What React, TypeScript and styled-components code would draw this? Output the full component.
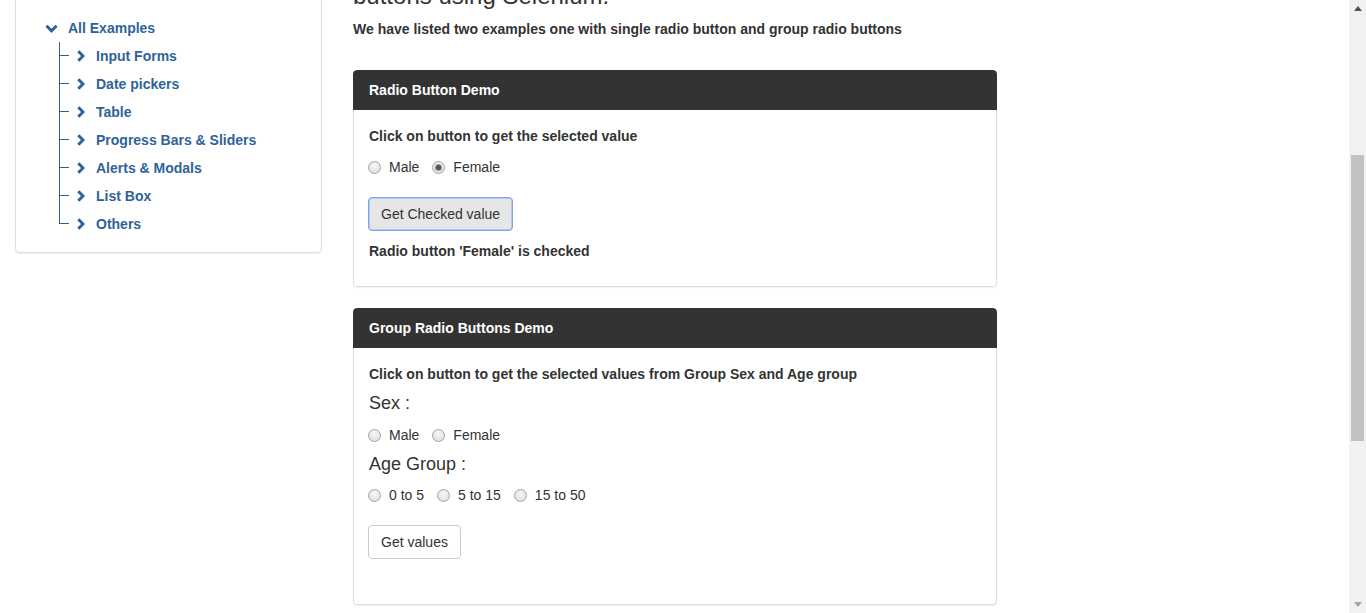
import React from 'react';
import styled, { createGlobalStyle } from 'styled-components';

const GlobalStyle = createGlobalStyle`
  html, body {
    margin: 0;
    padding: 0;
    overflow: hidden;
    background: #fff;
  }
  body {
    font-family: "Liberation Sans", Arial, Helvetica, sans-serif;
    font-size: 14px;
    line-height: 20px;
    color: #333;
  }
`

const Screen = styled.div`
  display: flex;
  width: 1366px;
  height: 613px;
  overflow: hidden;
`

const Viewport = styled.div`
  flex: 1;
  height: 613px;
  overflow: hidden;
`

const Page = styled.div`
  display: flex;
  align-items: flex-start;
  padding-left: 15px;
  gap: 31px;
`

// fake browser scrollbar
const ScrollTrack = styled.div`
  width: 17px;
  flex: none;
  height: 613px;
  background: #f1f1f1;
  display: flex;
  flex-direction: column;
  align-items: center;
`

const ScrollArrow = styled.div<{ $down?: boolean }>`
  height: 17px;
  width: 17px;
  display: flex;
  align-items: center;
  justify-content: center;
  ${p => p.$down ? 'margin-top: auto;' : ''}
`

const ScrollThumb = styled.div`
  width: 13px;
  height: 286px;
  margin-top: 138px;
  background: #c1c1c1;
`

/* ---------- sidebar ---------- */

const Sidebar = styled.aside`
  width: 307px;
  flex: none;
  margin-top: -40px;
`

const SidePanel = styled.div`
  border: 1px solid #ddd;
  border-radius: 4px;
  box-shadow: 0 1px 1px rgba(0, 0, 0, 0.05);
  padding: 53px 0 14px;
`

const TreeRow = styled.div`
  height: 28px;
  display: flex;
  align-items: center;
  padding-left: 29px;
  gap: 10px;
  color: #2f6398;
  font-weight: bold;
`

const TreeList = styled.ul`
  list-style: none;
  margin: 0;
  padding: 0 0 0 43px;
`

const TreeItem = styled.li`
  height: 28px;
  display: flex;
  align-items: stretch;
  color: #2f6398;
  font-weight: bold;
`

const Branch = styled.div`
  width: 10px;
  flex: none;
  display: flex;
  flex-direction: column;
`

const BranchTop = styled.div`
  height: 13px;
  border-left: 1px solid #2f6398;
  border-bottom: 1px solid #2f6398;
`

const BranchBottom = styled.div<{ $last?: boolean }>`
  flex: 1;
  border-left: 1px solid ${p => p.$last ? 'transparent' : '#2f6398'};
`

const ItemLabel = styled.div`
  display: flex;
  align-items: center;
  gap: 11px;
  padding-left: 8px;
`

/* ---------- main ---------- */

const Main = styled.main`
  width: 644px;
  flex: none;
  margin-top: -17px;
`

const Heading = styled.h3`
  margin: 0;
  font-size: 24px;
  line-height: 26px;
  font-weight: normal;
  white-space: nowrap;
`

const Intro = styled.p`
  margin: 10px 0 31px;
  font-weight: bold;
`

const Panel = styled.section`
  border-radius: 4px;
  overflow: hidden;
  margin-bottom: 21px;
  box-shadow: 0 1px 1px rgba(0, 0, 0, 0.05);
`

const PanelHeader = styled.div`
  background: #333;
  color: #fff;
  font-weight: bold;
  padding: 10px 16px;
  border-radius: 4px 4px 0 0;
`

const PanelBody = styled.div<{ $bottom: number }>`
  border: 1px solid #ddd;
  border-top: none;
  border-radius: 0 0 4px 4px;
  padding: 16px 14px ${p => p.$bottom}px;
`

const Bold = styled.p<{ $top?: number }>`
  margin: ${p => p.$top || 0}px 0 0 1px;
  font-weight: bold;
`

const GroupLabel = styled.div<{ $top: number }>`
  margin-top: ${p => p.$top}px;
  margin-left: 1px;
  font-size: 18px;
  line-height: 26px;
`

const RadioRow = styled.div<{ $top: number }>`
  margin-top: ${p => p.$top}px;
  height: 24px;
  display: flex;
  align-items: center;
  gap: 13px;
`

const Option = styled.label`
  display: flex;
  align-items: center;
  gap: 8px;
`

const RadioDot = styled.span<{ $checked?: boolean }>`
  width: 13px;
  height: 13px;
  box-sizing: border-box;
  border-radius: 50%;
  border: 1px solid #a3a3a3;
  background: radial-gradient(circle at 50% 35%, #f6f6f6 0%, #dcdcdc 100%);
  display: flex;
  align-items: center;
  justify-content: center;
  &::after {
    content: '';
    width: 5px;
    height: 5px;
    border-radius: 50%;
    background: ${p => p.$checked ? '#555' : 'transparent'};
    box-shadow: ${p => p.$checked ? '0 0 0 1px #9a9a9a' : 'none'};
  }
`

const Button = styled.button<{ $focused?: boolean; $top: number }>`
  display: block;
  margin-top: ${p => p.$top}px;
  font-family: inherit;
  font-size: 14px;
  line-height: 20px;
  color: #333;
  padding: 6px 12px;
  border-radius: 4px;
  cursor: pointer;
  background: ${p => p.$focused ? '#e6e6e6' : '#fff'};
  border: 1px solid ${p => p.$focused ? '#7ea4e4' : '#ccc'};
  box-shadow: ${p => p.$focused ? 'inset 0 0 0 1px #b3cbf0' : 'none'};
`

function ChevronDown() {
  return (
    <svg width="13" height="9" viewBox="0 0 13 9">
      <path d="M1.5 1.8 L6.5 6.8 L11.5 1.8" fill="none" stroke="#2f6398" strokeWidth="3" />
    </svg>
  );
}

function ChevronRight() {
  return (
    <svg width="8" height="12" viewBox="0 0 8 12">
      <path d="M1.3 1.2 L6 6 L1.3 10.8" fill="none" stroke="#2f6398" strokeWidth="3" />
    </svg>
  );
}

function Radio({ label, checked }: { label: string; checked?: boolean }) {
  return (
    <Option>
      <RadioDot $checked={checked} />
      {label}
    </Option>
  );
}

const examples = [
  'Input Forms',
  'Date pickers',
  'Table',
  'Progress Bars & Sliders',
  'Alerts & Modals',
  'List Box',
  'Others',
];

export default function App() {
  return (
    <Screen>
      <GlobalStyle />
      <Viewport>
        <Page>
          <Sidebar>
            <SidePanel>
              <TreeRow>
                <ChevronDown />
                All Examples
              </TreeRow>
              <TreeList>
                {examples.map((name, i) => (
                  <TreeItem key={name}>
                    <Branch>
                      <BranchTop />
                      <BranchBottom $last={i === examples.length - 1} />
                    </Branch>
                    <ItemLabel>
                      <ChevronRight />
                      {name}
                    </ItemLabel>
                  </TreeItem>
                ))}
              </TreeList>
            </SidePanel>
          </Sidebar>

          <Main>
            <Heading>buttons using Selenium.</Heading>
            <Intro>We have listed two examples one with single radio button and group radio buttons</Intro>

            <Panel>
              <PanelHeader>Radio Button Demo</PanelHeader>
              <PanelBody $bottom={25}>
                <Bold>Click on button to get the selected value</Bold>
                <RadioRow $top={9}>
                  <Radio label="Male" />
                  <Radio label="Female" checked />
                </RadioRow>
                <Button $focused $top={18}>Get Checked value</Button>
                <Bold $top={10}>Radio button 'Female' is checked</Bold>
              </PanelBody>
            </Panel>

            <Panel>
              <PanelHeader>Group Radio Buttons Demo</PanelHeader>
              <PanelBody $bottom={45}>
                <Bold>Click on button to get the selected values from Group Sex and Age group</Bold>
                <GroupLabel $top={6}>Sex :</GroupLabel>
                <RadioRow $top={7}>
                  <Radio label="Male" />
                  <Radio label="Female" />
                </RadioRow>
                <GroupLabel $top={4}>Age Group :</GroupLabel>
                <RadioRow $top={6}>
                  <Radio label="0 to 5" />
                  <Radio label="5 to 15" />
                  <Radio label="15 to 50" />
                </RadioRow>
                <Button $top={18}>Get values</Button>
              </PanelBody>
            </Panel>
          </Main>
        </Page>
      </Viewport>

      <ScrollTrack>
        <ScrollArrow>
          <svg width="8" height="5" viewBox="0 0 8 5"><path d="M0 5 L4 0 L8 5 Z" fill="#505050" /></svg>
        </ScrollArrow>
        <ScrollThumb />
        <ScrollArrow $down>
          <svg width="8" height="5" viewBox="0 0 8 5"><path d="M0 0 L4 5 L8 0 Z" fill="#a3a3a3" /></svg>
        </ScrollArrow>
      </ScrollTrack>
    </Screen>
  );
}
